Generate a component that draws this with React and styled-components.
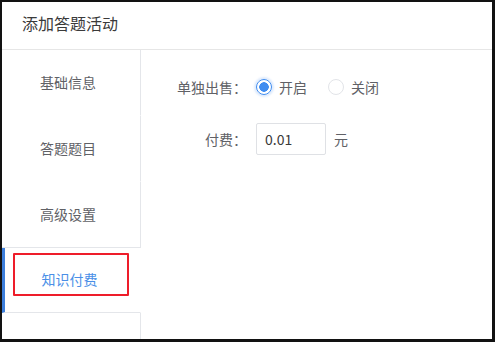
import React, { useState } from "react";
import styled, { createGlobalStyle } from "styled-components";

const GlobalStyle = createGlobalStyle`
  html, body {
    margin: 0;
    padding: 0;
    background: #fff;
  }
  body {
    font-family: "Noto Sans CJK SC", "Noto Sans", "Liberation Sans", sans-serif;
  }
  * {
    box-sizing: border-box;
  }
`;

const menu = ["基础信息", "答题题目", "高级设置", "知识付费"];

function App() {
  const [active] = useState(3);
  const [sellAlone, setSellAlone] = useState(true);

  return (
    <>
      <GlobalStyle />
      <Frame>
        <Header>添加答题活动</Header>
        <Main>
          <Sidebar>
            {menu.map((label, i) => (
              <MenuItem
                key={label}
                $active={i === active}
                $beforeActive={i === active - 1}
              >
                {label}
                {i === active && <Highlight />}
              </MenuItem>
            ))}
            <Filler />
          </Sidebar>
          <Content>
            <Row>
              <Label>单独出售：</Label>
              <RadioGroup>
                <RadioOption onClick={() => setSellAlone(true)}>
                  <RadioDot $checked={sellAlone} />
                  开启
                </RadioOption>
                <RadioOption onClick={() => setSellAlone(false)}>
                  <RadioDot $checked={!sellAlone} />
                  关闭
                </RadioOption>
              </RadioGroup>
            </Row>
            <Row>
              <Label>付费：</Label>
              <PriceInput defaultValue="0.01" />
              <Unit>元</Unit>
            </Row>
          </Content>
        </Main>
      </Frame>
    </>
  );
}

const Frame = styled.div`
  width: 495px;
  height: 342px;
  border-style: solid;
  border-color: #121212;
  border-width: 2px 3px 3px 2px;
  display: flex;
  flex-direction: column;
  background: #fff;
  overflow: hidden;
`;

const Header = styled.div`
  height: 48px;
  flex-shrink: 0;
  padding: 10px 20px 0;
  line-height: 22px;
  font-size: 16px;
  color: #3a3a3a;
  border-bottom: 1px solid #e6e6e6;
`;

const Main = styled.div`
  flex: 1;
  display: flex;
  min-height: 0;
`;

const Sidebar = styled.div`
  width: 139px;
  flex-shrink: 0;
  display: flex;
  flex-direction: column;
`;

const MenuItem = styled.div`
  position: relative;
  height: ${(p) => (p.$active ? "65px" : "66px")};
  flex-shrink: 0;
  display: flex;
  align-items: center;
  justify-content: center;
  padding: 0 6px 2px 0;
  font-size: 14px;
  color: ${(p) => (p.$active ? "#4a8fe7" : "#606166")};
  border-right: 1px solid ${(p) => (p.$active ? "transparent" : "#e4e6ea")};
  border-bottom: 1px solid
    ${(p) => (p.$active || p.$beforeActive ? "#e4e6ea" : "transparent")};
  border-left: ${(p) => (p.$active ? "3px solid #3d7fdc" : "0")};
`;

const Highlight = styled.span`
  position: absolute;
  left: 8px;
  top: 5px;
  width: 116px;
  height: 43px;
  border: 2px solid #ee1d2a;
  border-radius: 1px;
  pointer-events: none;
`;

const Filler = styled.div`
  flex: 1;
  border-right: 1px solid #e4e6ea;
`;

const Content = styled.div`
  flex: 1;
  padding: 21px 0 0 16px;
  display: flex;
  flex-direction: column;
  gap: 20px;
`;

const Row = styled.div`
  height: 32px;
  display: flex;
  align-items: center;
  font-size: 14px;
  color: #606166;
`;

const Label = styled.div`
  width: 90px;
  margin-right: 9px;
  text-align: right;
  white-space: nowrap;
`;

const RadioGroup = styled.div`
  display: flex;
  align-items: center;
  gap: 21px;
`;

const RadioOption = styled.label`
  display: flex;
  align-items: center;
  gap: 7px;
  cursor: pointer;
  color: #606166;
`;

const RadioDot = styled.span`
  width: 16px;
  height: 16px;
  border-radius: 50%;
  border: 1px solid ${(p) => (p.$checked ? "#3f8cf0" : "#e2e4e8")};
  background: ${(p) =>
    p.$checked
      ? "radial-gradient(circle, #3f8cf0 0 4.5px, #fff 5px)"
      : "#fff"};
  box-shadow: ${(p) => (p.$checked ? "0 0 2px 2px rgba(64, 140, 240, 0.18)" : "none")};
`;

const PriceInput = styled.input`
  width: 70px;
  height: 32px;
  padding: 0 8px;
  border: 1px solid #dfe1e5;
  border-radius: 2px;
  font-family: inherit;
  font-size: 14px;
  color: #3a3a3a;
  outline: none;
`;

const Unit = styled.span`
  margin-left: 8px;
`;

export default App;
